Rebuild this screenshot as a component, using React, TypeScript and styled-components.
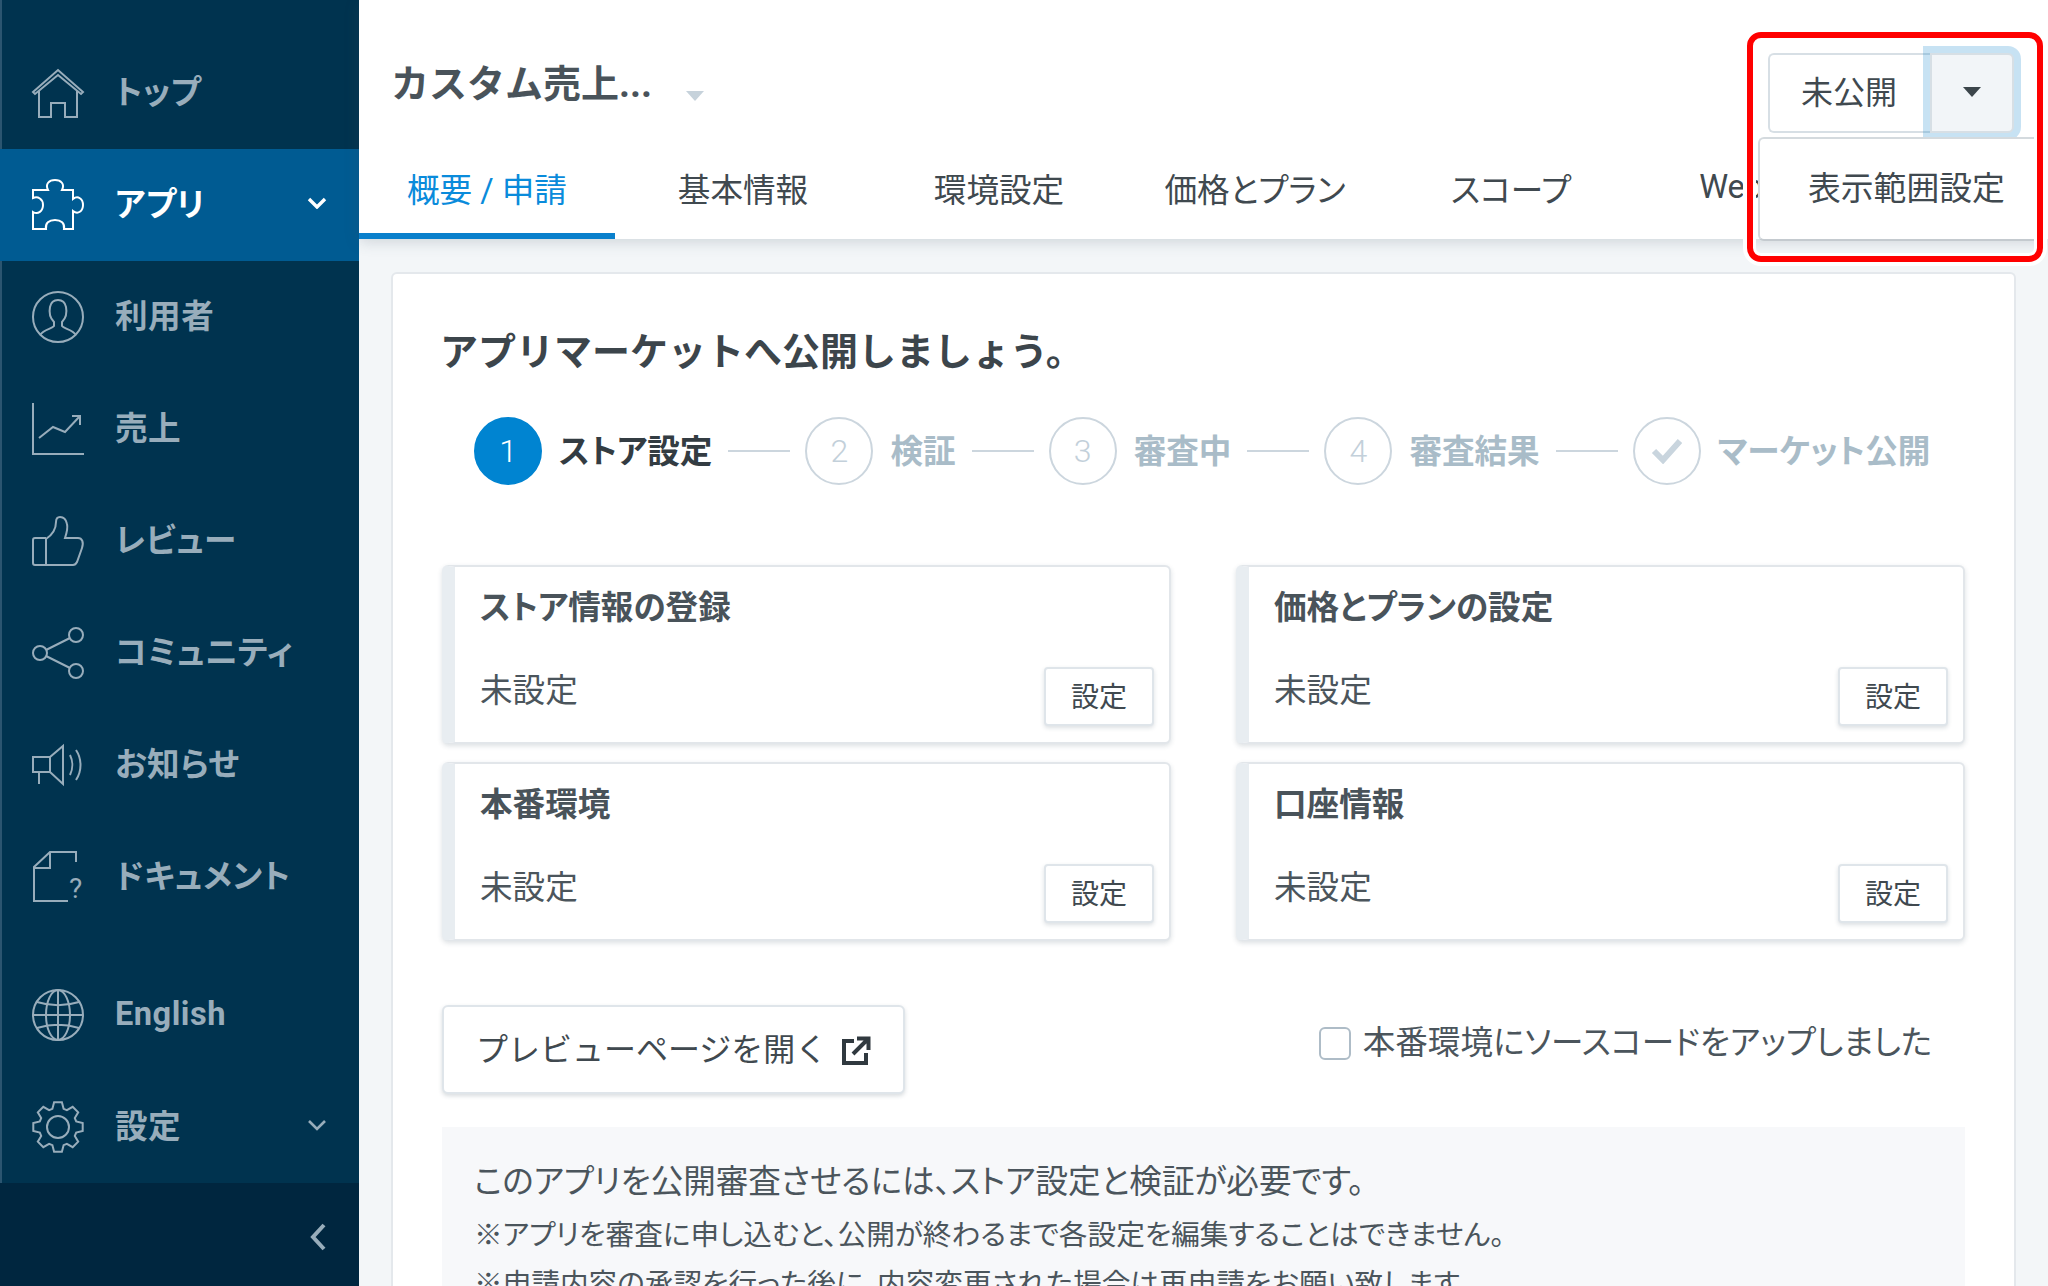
import React from 'react';
import styled, { createGlobalStyle } from 'styled-components';

const GlobalStyle = createGlobalStyle`
  html, body {
    margin: 0;
    padding: 0;
    background: #f3f6f8;
    font-family: Roboto, "Noto Sans CJK JP", sans-serif;
    font-feature-settings: "palt";
  }
  * { box-sizing: border-box; }
`;

const Page = styled.div`
  position: relative;
  display: flex;
  width: 2048px;
  height: 1286px;
  overflow: hidden;
`;

const Sidebar = styled.aside`
  display: flex;
  flex-direction: column;
  flex: 0 0 359px;
  padding-top: 37px;
  background: #00334f;
  border-left: 2px solid #2b5570;
`;

const NavItem = styled.div<{ $active?: boolean; $gapTop?: boolean }>`
  display: flex;
  align-items: center;
  flex: 0 0 112px;
  margin-left: -2px;
  margin-top: ${(p) => (p.$gapTop ? '26px' : '0')};
  padding: 0 32px;
  gap: 31px;
  color: ${(p) => (p.$active ? '#ffffff' : '#98adbb')};
  background: ${(p) => (p.$active ? '#005b92' : 'transparent')};
  font-size: 32.6px;
  font-weight: 700;
`;

const NavIcon = styled.svg`
  flex: 0 0 52px;
  width: 52px;
  height: 52px;
  fill: none;
  stroke: currentColor;
  stroke-width: 2;
  overflow: visible;
`;

const NavLabel = styled.span<{ $latin?: boolean }>`
  flex: 1;
  padding-bottom: ${(p) => (p.$latin ? '2px' : '8px')};
  letter-spacing: 0.5px;
`;

const Chevron = styled.svg<{ $bold?: boolean }>`
  width: 20px;
  height: 12px;
  margin: 0 0 4px;
  fill: none;
  stroke: currentColor;
  stroke-width: ${(p) => (p.$bold ? 3.4 : 2.6)};
`;

const SideFooter = styled.div`
  display: flex;
  justify-content: flex-end;
  align-items: center;
  margin: auto 0 0 -2px;
  height: 103px;
  padding: 0 33px 0 0;
  background: #00263f;
  color: #98adbb;
`;

const Collapse = styled.svg`
  width: 16px;
  height: 28px;
  margin-top: 5px;
  fill: none;
  stroke: currentColor;
  stroke-width: 4;
`;

const Main = styled.main`
  display: flex;
  flex-direction: column;
  flex: 1;
  min-width: 0;
`;

const Header = styled.header`
  position: relative;
  z-index: 2;
  background: #ffffff;
  box-shadow: 0 3px 14px rgba(60, 80, 100, 0.2);
`;

const TitleRow = styled.div`
  display: flex;
  justify-content: space-between;
  align-items: flex-start;
  height: 139px;
  padding: 0 34px 0 32px;
`;

const AppSelect = styled.div`
  display: flex;
  align-items: flex-start;
  gap: 34px;
  margin-top: 54px;
`;

const AppName = styled.h1`
  margin: 0;
  color: #49535a;
  font-size: 38px;
  font-feature-settings: normal;
  line-height: 60px;
  font-weight: 700;
`;

const Caret = styled.span<{ $dark?: boolean }>`
  width: 0;
  height: 0;
  margin-top: ${(p) => (p.$dark ? '0' : '37px')};
  border-style: solid;
  border-color: ${(p) => (p.$dark ? '#3c454b' : '#c6d2db')} transparent transparent;
  border-width: 10px 9px 0;
`;

const Split = styled.div`
  position: relative;
  display: flex;
  width: 246px;
  height: 80px;
  margin-top: 53px;
`;

const StatusButton = styled.div`
  display: flex;
  justify-content: center;
  align-items: center;
  width: 162px;
  padding: 0 2px 6px 0;
  background: #ffffff;
  border: 2px solid #d7dfe5;
  border-right: none;
  border-radius: 6px 0 0 6px;
  color: #40494f;
  font-size: 32px;
`;

const ToggleButton = styled.div`
  position: relative;
  display: flex;
  justify-content: center;
  align-items: center;
  flex: 1;
  padding-bottom: 2px;
  background: #f2f5f8;
  border: 2px solid #d7dfe5;
  border-radius: 0 6px 6px 0;
  box-shadow: 0 0 0 7px rgba(0, 125, 200, 0.22);
`;

const Menu = styled.div`
  position: absolute;
  top: 84px;
  left: -10px;
  width: 276px;
  height: 104px;
  display: flex;
  align-items: center;
  padding: 0 0 8px 48px;
  background: #ffffff;
  border: 2px solid #d4dade;
  border-right: none;
  border-bottom-color: #c4cacf;
  border-radius: 6px 0 0 6px;
  color: #40494f;
  font-size: 32.8px;
  white-space: nowrap;
`;

const Tabs = styled.nav`
  display: flex;
  height: 100px;
  overflow: hidden;
`;

const Tab = styled.div<{ $active?: boolean }>`
  display: flex;
  justify-content: center;
  align-items: center;
  flex: 0 0 256px;
  padding-top: 2px;
  color: ${(p) => (p.$active ? '#0a8bdb' : '#40494f')};
  border-bottom: 6px solid ${(p) => (p.$active ? '#0a80cc' : 'transparent')};
  font-size: 32.6px;
  white-space: nowrap;
`;

const Content = styled.section`
  flex: 1;
  min-height: 0;
  margin: 33px 32px 0 32px;
  padding: 52px 49px 0 49px;
  background: #ffffff;
  border: 2px solid #e4e8ec;
  border-bottom: none;
  border-radius: 6px 6px 0 0;
  overflow: hidden;
`;

const Heading = styled.h2`
  margin: 0 0 0 -2px;
  color: #3c454b;
  font-size: 38px;
  font-feature-settings: normal;
  line-height: 52px;
  font-weight: 700;
`;

const Stepper = styled.ol`
  display: flex;
  align-items: center;
  margin: 39px 0 0;
  padding: 0 0 0 32px;
  list-style: none;
`;

const StepDot = styled.span<{ $current?: boolean }>`
  display: flex;
  justify-content: center;
  align-items: center;
  flex: 0 0 68px;
  height: 68px;
  border-radius: 50%;
  border: 2px solid ${(p) => (p.$current ? '#0084d1' : '#ccd6de')};
  background: ${(p) => (p.$current ? '#0084d1' : '#ffffff')};
  color: ${(p) => (p.$current ? '#ffffff' : '#c3d0da')};
  font-size: 32px;
  font-weight: 300;
`;

const StepLabel = styled.span<{ $current?: boolean }>`
  margin-left: 17px;
  padding-bottom: 6px;
  color: ${(p) => (p.$current ? '#333c42' : '#a9bcc8')};
  font-size: 32.6px;
  font-weight: 700;
  white-space: nowrap;
`;

const StepLine = styled.span`
  flex: 0 0 62px;
  height: 2px;
  margin: 0 15px 0 16px;
  background: #ccd6de;
`;

const TaskGrid = styled.div`
  display: grid;
  grid-template-columns: 729px 729px;
  grid-auto-rows: 179px;
  column-gap: 65px;
  row-gap: 18px;
  margin-top: 80px;
`;

const TaskCard = styled.article`
  padding: 21px 15px 0 25px;
  background: #ffffff;
  border: 2px solid #e2e6ea;
  border-left: 13px solid #e8edf1;
  border-radius: 6px;
  box-shadow: 0 2px 5px rgba(40, 60, 80, 0.16);
`;

const TaskTitle = styled.h3`
  margin: 0;
  color: #49535a;
  font-size: 32.6px;
  line-height: 40px;
  font-weight: 700;
`;

const TaskRow = styled.div`
  display: flex;
  justify-content: space-between;
  align-items: flex-start;
  margin-top: 39px;
`;

const TaskStatus = styled.span`
  color: #4b555c;
  font-size: 32.6px;
  line-height: 48px;
`;

const SetButton = styled.div`
  display: flex;
  justify-content: center;
  align-items: center;
  width: 110px;
  height: 59px;
  padding-bottom: 4px;
  background: #ffffff;
  border: 2px solid #dfe5ea;
  border-radius: 4px;
  box-shadow: 0 2px 4px rgba(40, 60, 80, 0.16);
  color: #40494f;
  font-size: 28px;
`;

const ActionRow = styled.div`
  display: flex;
  justify-content: space-between;
  align-items: flex-start;
  margin-top: 64px;
  padding-right: 33px;
`;

const PreviewButton = styled.div`
  display: flex;
  align-items: center;
  gap: 14px;
  width: 463px;
  height: 89px;
  padding: 0 0 6px 32px;
  background: #ffffff;
  border: 2px solid #dfe5ea;
  border-radius: 6px;
  box-shadow: 0 2px 4px rgba(40, 60, 80, 0.18);
  color: #40494f;
  font-size: 32px;
  font-feature-settings: normal;
`;

const ExternalIcon = styled.svg`
  width: 30px;
  height: 30px;
  margin-top: 8px;
  fill: none;
  stroke: #30393f;
  stroke-width: 4;
`;

const CheckLabel = styled.label`
  display: flex;
  align-items: center;
  gap: 12px;
  margin-top: 15px;
  color: #4b555c;
  font-size: 32.6px;
  line-height: 46px;
`;

const CheckBox = styled.span`
  width: 32px;
  height: 33px;
  background: #ffffff;
  border: 2px solid #aebcc7;
  border-radius: 6px;
`;

const InfoBox = styled.div`
  margin-top: 33px;
  padding: 33px 32px 0;
  height: 200px;
  background: #f7f8fa;
  color: #4b555c;
`;

const InfoLead = styled.p`
  margin: 0 0 7px;
  font-size: 32.6px;
  line-height: 44px;
`;

const InfoNote = styled.p`
  margin: 0;
  font-size: 28.65px;
  line-height: 49px;
`;

const Annotation = styled.div`
  position: absolute;
  z-index: 5;
  left: 1747px;
  top: 32px;
  width: 296px;
  height: 230px;
  border: 6px solid #ff0000;
  border-radius: 14px;
  box-shadow: 0 0 0 4px #ffffff, inset 0 0 0 3px #ffffff;
  pointer-events: none;
`;

const gearPath = (() => {
  const teeth = 8;
  const outer = 25;
  const inner = 19;
  const pts: string[] = [];
  for (let i = 0; i < teeth; i++) {
    const a = (i * 2 * Math.PI) / teeth - Math.PI / 2;
    const step = (2 * Math.PI) / teeth;
    const offsets: [number, number][] = [
      [-0.38, inner],
      [-0.2, outer],
      [0.2, outer],
      [0.38, inner],
    ];
    offsets.forEach(([o, r]) => {
      const t = a + o * step;
      pts.push(`${(26 + r * Math.cos(t)).toFixed(1)} ${(26 + r * Math.sin(t)).toFixed(1)}`);
    });
  }
  return `M${pts.join(' L')} Z`;
})();

const icons: Record<string, React.ReactNode> = {
  home: (
    <>
      <path d="M1 25 L26 3 L51 25 L49 27 L26 8 L3 27 Z" />
      <path d="M7 24 V50 H19 V36 H33 V50 H45 V24" />
    </>
  ),
  puzzle: (
    <path d="M1 11 H16 C13 5 17 1 23 1 C29 1 33 5 30 11 H41 V20 C46 16 51 20 51 26 C51 32 46 36 41 32 V50 H32 C33 44 29 41 23 41 C17 41 13 44 14 50 H1 V33 C6 36 11 32 11 26 C11 20 6 17 1 19 Z" />
  ),
  user: (
    <>
      <circle cx="26" cy="26" r="25" />
      <path d="M8 44 C12 38 20 38 22 35 V31 C18 27 17 21 18 16 C19 11 22 9 26 9 C30 9 33 11 34 16 C35 21 34 27 30 31 V35 C32 38 40 38 44 44" />
    </>
  ),
  chart: (
    <>
      <path d="M1 0 V51 H52" />
      <path d="M7 35 L21 24 L33 29 L48 13" />
      <path d="M40 13 H48 V22" />
    </>
  ),
  thumb: (
    <>
      <path d="M14 23 H3 C2 23 1 24 1 25 V48 C1 49 2 50 3 50 H14" />
      <path d="M14 50 H41 C43 50 44 49 45 47 L50 33 C52 27 50 23 46 23 H33 C35 17 36 13 35 9 C34 4 31 2 28 2 C25 2 24 4 24 7 C24 14 20 20 14 24 Z" />
    </>
  ),
  share: (
    <>
      <circle cx="8" cy="26" r="7" />
      <circle cx="44" cy="8" r="7" />
      <circle cx="44" cy="44" r="7" />
      <path d="M14 23 L38 11 M14 29 L38 41" />
    </>
  ),
  megaphone: (
    <>
      <path d="M1 18 H18 L31 7 V45 L18 33 H1 Z M18 18 V33 M7 33 V45" />
      <path d="M38 16 C41 22 41 30 38 36 M44 11 C50 20 50 32 44 41" />
    </>
  ),
  doc: (
    <>
      <path d="M44 11 V1 H18 L2 16 V50 H36" />
      <path d="M18 1 V17 H2" />
      <text x="37" y="47" fontSize="28" fontWeight="400" fill="currentColor" stroke="none" fontFamily="Roboto, sans-serif">?</text>
    </>
  ),
  globe: (
    <>
      <circle cx="26" cy="26" r="25" />
      <ellipse cx="26" cy="26" rx="12" ry="25" />
      <path d="M26 1 V51 M1 26 H51 M5 13 C18 17 34 17 47 13 M5 39 C18 35 34 35 47 39" />
    </>
  ),
  gear: (
    <>
      <path d={gearPath} />
      <circle cx="26" cy="26" r="11" />
    </>
  ),
};

const navTop = [
  { icon: 'home', label: 'トップ' },
  { icon: 'puzzle', label: 'アプリ', active: true, more: true },
  { icon: 'user', label: '利用者' },
  { icon: 'chart', label: '売上' },
  { icon: 'thumb', label: 'レビュー' },
  { icon: 'share', label: 'コミュニティ' },
  { icon: 'megaphone', label: 'お知らせ' },
  { icon: 'doc', label: 'ドキュメント' },
  { icon: 'globe', label: 'English', gapTop: true, latin: true },
  { icon: 'gear', label: '設定', more: true },
];

const tabs = ['概要 / 申請', '基本情報', '環境設定', '価格とプラン', 'スコープ', 'Webhook'];
const steps = ['審査中', '審査結果'];
const tasks = ['ストア情報の登録', '価格とプランの設定', '本番環境', '口座情報'];

const App: React.FC = () => {
  return (
    <Page>
      <GlobalStyle />
      <Sidebar>
        {navTop.map((item) => (
          <NavItem key={item.label} $active={item.active} $gapTop={item.gapTop}>
            <NavIcon viewBox="0 0 52 52">{icons[item.icon]}</NavIcon>
            <NavLabel $latin={item.latin}>{item.label}</NavLabel>
            {item.more && (
              <Chevron viewBox="0 0 20 12" $bold={item.active}>
                <path d="M2 2 L10 10 L18 2" />
              </Chevron>
            )}
          </NavItem>
        ))}
        <SideFooter>
          <Collapse viewBox="0 0 16 28">
            <path d="M14 2 L3 14 L14 26" />
          </Collapse>
        </SideFooter>
      </Sidebar>
      <Main>
        <Header>
          <TitleRow>
            <AppSelect>
              <AppName>カスタム売上...</AppName>
              <Caret />
            </AppSelect>
            <Split>
              <StatusButton>未公開</StatusButton>
              <ToggleButton>
                <Caret $dark />
              </ToggleButton>
              <Menu>表示範囲設定</Menu>
            </Split>
          </TitleRow>
          <Tabs>
            {tabs.map((tab, index) => (
              <Tab key={tab} $active={index === 0}>{tab}</Tab>
            ))}
          </Tabs>
        </Header>
        <Content>
          <Heading>アプリマーケットへ公開しましょう。</Heading>
          <Stepper>
            <StepDot $current>1</StepDot>
            <StepLabel $current>ストア設定</StepLabel>
            <StepLine />
            <StepDot>2</StepDot>
            <StepLabel>検証</StepLabel>
            <StepLine />
            <StepDot>3</StepDot>
            <StepLabel>{steps[0]}</StepLabel>
            <StepLine />
            <StepDot>4</StepDot>
            <StepLabel>{steps[1]}</StepLabel>
            <StepLine />
            <StepDot>
              <svg width="32" height="26" viewBox="0 0 32 26" fill="none" stroke="#c9d5de" strokeWidth="6">
                <path d="M3 13 L12 22 L29 3" />
              </svg>
            </StepDot>
            <StepLabel>マーケット公開</StepLabel>
          </Stepper>
          <TaskGrid>
            {tasks.map((task) => (
              <TaskCard key={task}>
                <TaskTitle>{task}</TaskTitle>
                <TaskRow>
                  <TaskStatus>未設定</TaskStatus>
                  <SetButton>設定</SetButton>
                </TaskRow>
              </TaskCard>
            ))}
          </TaskGrid>
          <ActionRow>
            <PreviewButton>
              プレビューページを開く
              <ExternalIcon viewBox="0 0 30 30">
                <path d="M13 5 H3 V27 H25 V17" />
                <path d="M12 18 L26 4 M16 2.5 H27.5 V14" />
              </ExternalIcon>
            </PreviewButton>
            <CheckLabel>
              <CheckBox />
              本番環境にソースコードをアップしました
            </CheckLabel>
          </ActionRow>
          <InfoBox>
            <InfoLead>このアプリを公開審査させるには、ストア設定と検証が必要です。</InfoLead>
            <InfoNote>※アプリを審査に申し込むと、公開が終わるまで各設定を編集することはできません。</InfoNote>
            <InfoNote>※申請内容の承認を行った後に、内容変更された場合は再申請をお願い致します。</InfoNote>
          </InfoBox>
        </Content>
      </Main>
      <Annotation />
    </Page>
  );
};

export default App;
